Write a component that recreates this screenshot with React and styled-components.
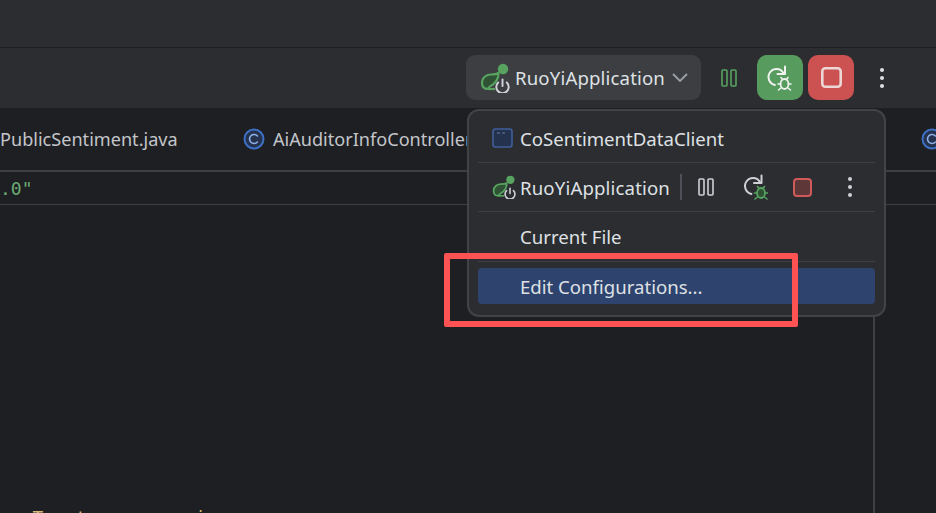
import React from 'react'
import styled, { createGlobalStyle } from 'styled-components'

const GlobalStyle = createGlobalStyle`
  html, body {
    margin: 0;
    padding: 0;
    background: #1e1f22;
  }
`

const Page = styled.div`
  position: relative;
  width: 936px;
  height: 513px;
  overflow: hidden;
  display: flex;
  flex-direction: column;
  background: #1e1f22;
  font-family: "Noto Sans", "Open Sans", sans-serif;
  color: #dfe1e5;
`

const TitleBar = styled.div`
  flex: none;
  height: 47px;
  background: #2b2d30;
  border-bottom: 1px solid #1e1f22;
`

const Toolbar = styled.div`
  flex: none;
  height: 60px;
  background: #2b2d30;
  display: flex;
  align-items: flex-start;
  padding-top: 7px;
  padding-left: 466px;
  box-sizing: border-box;
`

const ConfigSelect = styled.div`
  width: 235px;
  height: 45px;
  margin-right: 5px;
  border-radius: 9px;
  background: #3c3e42;
  display: flex;
  align-items: center;
  padding-left: 14px;
  box-sizing: border-box;
  font-size: 18.6px;

  svg:last-child {
    margin-left: 7px;
  }
`

const ConfigName = styled.span`
  margin-left: 5px;
  width: 150px;
  white-space: nowrap;
  letter-spacing: 0.15px;
`

const ToolSlot = styled.div`
  width: 46px;
  height: 45px;
  display: flex;
  align-items: center;
  justify-content: center;
  margin-left: ${p => p.$gap || 0}px;
  border-radius: 10px;
  background: ${p => p.$bg || 'transparent'};
`

const TabBar = styled.div`
  flex: none;
  height: 64px;
  box-sizing: border-box;
  background: #1e1f22;
  border-bottom: 2px solid #3d3f43;
  display: flex;
  align-items: center;
  white-space: nowrap;
  font-size: 18.1px;
  color: #c3c5ca;
`

const Tab = styled.div`
  display: flex;
  align-items: center;
  gap: 8px;
  flex: none;
  width: ${p => p.$width}px;
`

const Breadcrumb = styled.div`
  flex: none;
  height: 33px;
  box-sizing: border-box;
  border-bottom: 1px solid #3d3f43;
  display: flex;
  align-items: center;
  font-family: "DejaVu Sans Mono", monospace;
  font-size: 18px;
  color: #6aab73;
`

const Editor = styled.div`
  flex: 1;
  min-height: 0;
  display: flex;
  justify-content: flex-end;
`

const EditorText = styled.div`
  flex: 1;
  overflow: hidden;
  padding-top: 301px;
  font-family: "DejaVu Sans Mono", monospace;
  font-size: 18px;
  line-height: 24px;
  color: #d5b778;
  white-space: pre;
`

const MarginGuide = styled.div`
  width: 61px;
  border-left: 2px solid #3d3f43;
`

const Popup = styled.div`
  position: absolute;
  left: 467px;
  top: 109px;
  width: 419px;
  height: 208px;
  box-sizing: border-box;
  padding: 3px 9px 10px;
  border: 2px solid #414347;
  border-radius: 12px;
  background: #2b2d30;
  font-size: 18.6px;
  color: #dfe1e5;
`

const PopupRow = styled.div`
  height: ${p => p.$height || 49}px;
  box-sizing: border-box;
  border-bottom: 1px solid #3d3f43;
  padding-left: 14px;
  display: flex;
  align-items: center;
`

const IconSlot = styled.div`
  width: 28px;
  flex: none;
  display: flex;
  align-items: center;
`

const RowName = styled.span`
  white-space: nowrap;
  width: 150px;
  flex: none;
  letter-spacing: ${p => p.$spacing || 0}px;
`

const RowActions = styled.div`
  display: flex;
  align-items: center;
  height: 26px;
  margin-left: 10px;
  border-left: 2px solid #4e5157;
`

const ActionSlot = styled.div`
  width: 48px;
  display: flex;
  align-items: center;
  justify-content: center;
`

const SelectedRow = styled.div`
  height: 36px;
  margin-top: 6px;
  border-radius: 4px;
  background: #2e436e;
  padding-left: 42px;
  display: flex;
  align-items: center;
`

const Callout = styled.div`
  position: absolute;
  left: 444px;
  top: 253px;
  width: 354px;
  height: 74px;
  box-sizing: border-box;
  border: 6px solid #ff5252;
  border-radius: 2px;
`

const RunConfigIcon = ({ size = 30 }) => (
  <svg width={size} height={size} viewBox="0 0 30 30" fill="none">
    <path
      d="M2 20C2 14 7 11.5 11 11.5C14 11.5 17 11 18.5 10C18.5 16 15.5 19.5 13 21.5C10.5 23 8.5 24 8 26C4.5 26 2 24 2 20Z"
      fill="#2f5234"
      stroke="#57a35f"
      strokeWidth="2.2"
    />
    <path d="M8 26H15" stroke="#57a35f" strokeWidth="2.2" />
    <circle cx="23" cy="6" r="5.2" fill="#57a35f" />
    <path
      d="M18.2 19.5A6.2 6.2 0 1 0 26.8 19.5"
      stroke="#ced0d6"
      strokeWidth="2"
      strokeLinecap="round"
    />
    <path d="M22.5 16.5V23" stroke="#ced0d6" strokeWidth="2" strokeLinecap="round" />
  </svg>
)

const Chevron = () => (
  <svg width="16" height="9" viewBox="0 0 16 9" fill="none">
    <path d="M1 1L8 8L15 1" stroke="#9da0a8" strokeWidth="1.8" />
  </svg>
)

const PauseIcon = ({ color, height = 18 }) => (
  <svg width="16" height={height} viewBox={`0 0 16 ${height}`} fill="none">
    <rect x="1" y="1" width="5" height={height - 2} rx="1" stroke={color} strokeWidth="1.6" />
    <rect x="10" y="1" width="5" height={height - 2} rx="1" stroke={color} strokeWidth="1.6" />
  </svg>
)

const RerunBugIcon = ({ arrow, bug, bugFill = 'none', shift = 0 }) => (
  <svg width="28" height="28" viewBox={`${-shift} 0 28 28`} fill="none">
    <path
      d="M15.8 8.8A8 8 0 1 0 7.5 20.9"
      stroke={arrow}
      strokeWidth="2"
      strokeLinecap="round"
    />
    <path d="M17.5 2.5V10H10" stroke={arrow} strokeWidth="2" strokeLinecap="round" strokeLinejoin="round" />
    <ellipse cx="17" cy="20" rx="4" ry="5" fill={bugFill} stroke={bug} strokeWidth="1.8" />
    <path
      d="M13.5 13.5L15 15.5M20.5 13.5L19 15.5M10.5 20H13M21 20H23.5M11 26L13.5 24M23 26L20.5 24"
      stroke={bug}
      strokeWidth="1.6"
      strokeLinecap="round"
    />
  </svg>
)

const StopIcon = ({ size, fill, stroke, width }) => (
  <svg width={size} height={size} viewBox={`0 0 ${size} ${size}`} fill={fill}>
    <rect
      x={width / 2}
      y={width / 2}
      width={size - width}
      height={size - width}
      rx="3"
      stroke={stroke}
      strokeWidth={width}
    />
  </svg>
)

const DotsIcon = ({ color, step = 8 }) => (
  <svg width="6" height={step * 2 + 4} viewBox={`0 0 6 ${step * 2 + 4}`} fill={color}>
    <circle cx="3" cy="2" r="2" />
    <circle cx="3" cy={step + 2} r="2" />
    <circle cx="3" cy={step * 2 + 2} r="2" />
  </svg>
)

const ClassIcon = () => (
  <svg width="22" height="22" viewBox="0 0 22 22" fill="none">
    <circle cx="11" cy="11" r="9.5" fill="#25324d" stroke="#3d70c4" strokeWidth="2" />
    <path
      d="M14.4 8A4.5 4.5 0 1 0 14.4 14"
      stroke="#8fb0e8"
      strokeWidth="1.6"
      strokeLinecap="round"
    />
  </svg>
)

const WindowIcon = () => (
  <svg width="21" height="20" viewBox="0 0 21 20" fill="none">
    <rect x="1" y="1" width="19" height="18" rx="2.5" fill="#25324d" stroke="#3f5f9c" strokeWidth="1.6" />
    <path d="M5 5H8M10 5H13" stroke="#6b7f9f" strokeWidth="1.2" />
  </svg>
)

const App = () => {
  return (
    <Page>
      <GlobalStyle />
      <TitleBar />
      <Toolbar>
        <ConfigSelect>
          <RunConfigIcon />
          <ConfigName>RuoYiApplication</ConfigName>
          <Chevron />
        </ConfigSelect>
        <ToolSlot>
          <PauseIcon color="#57a35f" />
        </ToolSlot>
        <ToolSlot $bg="#579b5e" $gap={5}>
          <RerunBugIcon arrow="#f0f2f0" bug="#f0f2f0" shift={1.5} />
        </ToolSlot>
        <ToolSlot $bg="#cc5252" $gap={5}>
          <StopIcon size={21} fill="none" stroke="#ecd6d6" width={2.6} />
        </ToolSlot>
        <ToolSlot $gap={5}>
          <DotsIcon color="#dfe1e5" />
        </ToolSlot>
      </Toolbar>
      <TabBar>
        <Tab $width={243}>PublicSentiment.java</Tab>
        <Tab $width={678}>
          <ClassIcon />
          AiAuditorInfoController.java
        </Tab>
        <Tab $width={30}>
          <ClassIcon />
        </Tab>
      </TabBar>
      <Breadcrumb>.0"</Breadcrumb>
      <Editor>
        <EditorText>{'   T   t          i'}</EditorText>
        <MarginGuide />
      </Editor>

      <Popup>
        <PopupRow>
          <IconSlot>
            <WindowIcon />
          </IconSlot>
          <RowName>CoSentimentDataClient</RowName>
        </PopupRow>
        <PopupRow>
          <IconSlot>
            <RunConfigIcon size={24} />
          </IconSlot>
          <RowName $spacing={0.15}>RuoYiApplication</RowName>
          <RowActions>
            <ActionSlot>
              <PauseIcon color="#ced0d6" />
            </ActionSlot>
            <ActionSlot>
              <RerunBugIcon arrow="#ced0d6" bug="#57a35f" bugFill="#2f5234" shift={4} />
            </ActionSlot>
            <ActionSlot>
              <StopIcon size={19} fill="#5e3838" stroke="#d05a5a" width={2} />
            </ActionSlot>
            <ActionSlot>
              <DotsIcon color="#ced0d6" />
            </ActionSlot>
          </RowActions>
        </PopupRow>
        <PopupRow $height={50}>
          <IconSlot />
          <RowName>Current File</RowName>
        </PopupRow>
        <SelectedRow>Edit Configurations...</SelectedRow>
      </Popup>
      <Callout />
    </Page>
  )
}

export default App
